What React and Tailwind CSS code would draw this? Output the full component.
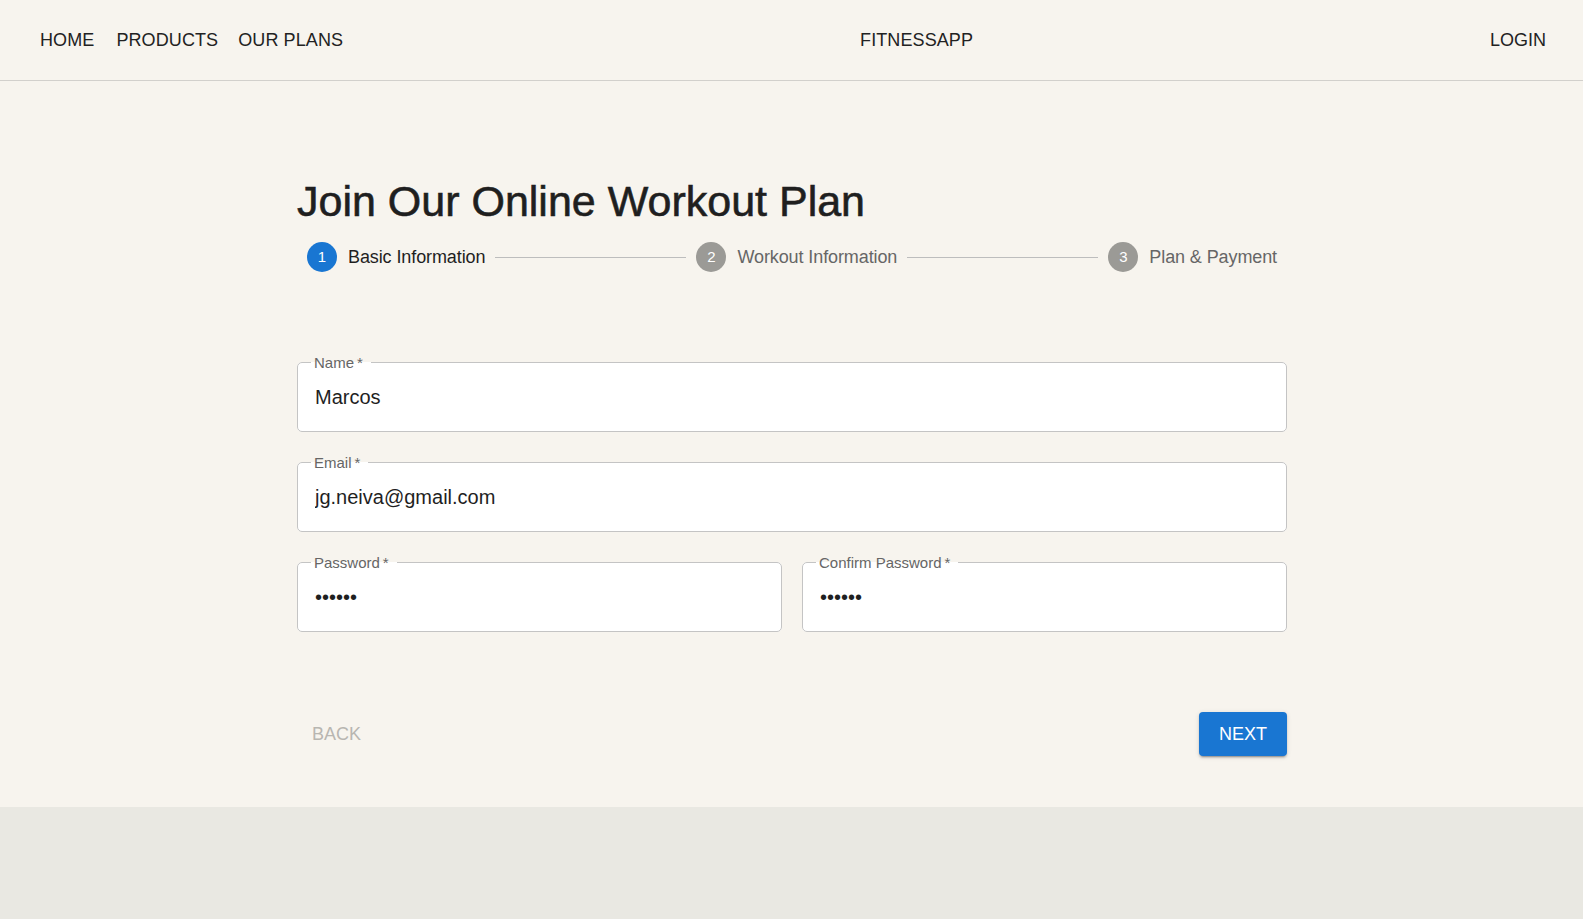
import React from 'react';

const steps = [
  { n: 1, label: 'Basic Information', active: true },
  { n: 2, label: 'Workout Information', active: false },
  { n: 3, label: 'Plan & Payment', active: false },
];

function Field({ label, type = 'text', value }) {
  return (
    <fieldset className="min-w-0 border border-[#c4c4c4] rounded-[5px] bg-white p-0 pb-[8px]">
      <legend className="ml-[13px] pl-[3px] pr-[8px] text-[15px] leading-[17px] text-[#666666]">
        {label}
        <span className="ml-[3px]">*</span>
      </legend>
      <input
        type={type}
        defaultValue={value}
        readOnly
        className="block w-full h-[52px] px-[17px] bg-transparent text-[20px] text-[#1f1f1f] outline-none"
      />
    </fieldset>
  );
}

export default function App() {
  return (
    <div
      className="min-h-screen bg-[#e9e8e2] text-[#1f1f1f]"
      style={{ fontFamily: "'Liberation Sans', Arial, sans-serif" }}
    >
      {/* Top bar */}
      <header className="h-[81px] flex items-center justify-between pl-10 pr-[37px] bg-[#f7f4ee] border-b border-[#d2d0cc] text-[18px] text-[#222222]">
        <nav className="flex items-center tracking-[0.1px]">
          <span>HOME</span>
          <span className="ml-[22px]">PRODUCTS</span>
          <span className="ml-[20px]">OUR PLANS</span>
        </nav>
        <span className="tracking-[0.1px]">FITNESSAPP</span>
        <span>LOGIN</span>
      </header>

      {/* Sign up form */}
      <main className="bg-[#f7f4ee] pt-[99px] pb-[51px]">
        <div className="max-w-[991px] mx-auto pl-px">
          <h1 className="text-[43px] leading-[42px] font-normal [-webkit-text-stroke:0.6px_#1f1f1f] text-[#1f1f1f]">
            Join Our Online Workout Plan
          </h1>

          <div className="mt-[20px] flex items-center h-[30px]">
            {steps.map((s, i) => (
              <React.Fragment key={s.n}>
                {i > 0 && <div className="flex-1 h-px bg-[#bdbdbd]" />}
                <div className="flex items-center gap-[11px] px-[10px]">
                  <span
                    className={`w-[30px] h-[30px] rounded-full flex items-center justify-center text-white text-[15px] ${
                      s.active ? 'bg-[#1976d2]' : 'bg-[#9b9a96]'
                    }`}
                  >
                    {s.n}
                  </span>
                  <span
                    className={`text-[18px] tracking-[-0.1px] ${s.active ? 'text-[#1f1f1f]' : 'text-[#666666]'}`}
                  >
                    {s.label}
                  </span>
                </div>
              </React.Fragment>
            ))}
          </div>

          <div className="mt-[82px] flex flex-col gap-[22px]">
            <Field label="Name" value="Marcos" />
            <Field label="Email" value="jg.neiva@gmail.com" />
            <div className="grid grid-cols-2 gap-[20px]">
              <Field label="Password" type="password" value="123456" />
              <Field label="Confirm Password" type="password" value="123456" />
            </div>
          </div>

          <div className="mt-[80px] flex items-center justify-between">
            <button className="pl-[15px] text-[18px] text-[#b8b6b1] cursor-default">BACK</button>
            <button className="h-[44px] px-[20px] rounded-[4px] bg-[#1976d2] text-white text-[18px] shadow-[0_3px_1px_-2px_rgba(0,0,0,0.2),0_2px_2px_0_rgba(0,0,0,0.14),0_1px_5px_0_rgba(0,0,0,0.12)]">
              NEXT
            </button>
          </div>
        </div>
      </main>
    </div>
  );
}
